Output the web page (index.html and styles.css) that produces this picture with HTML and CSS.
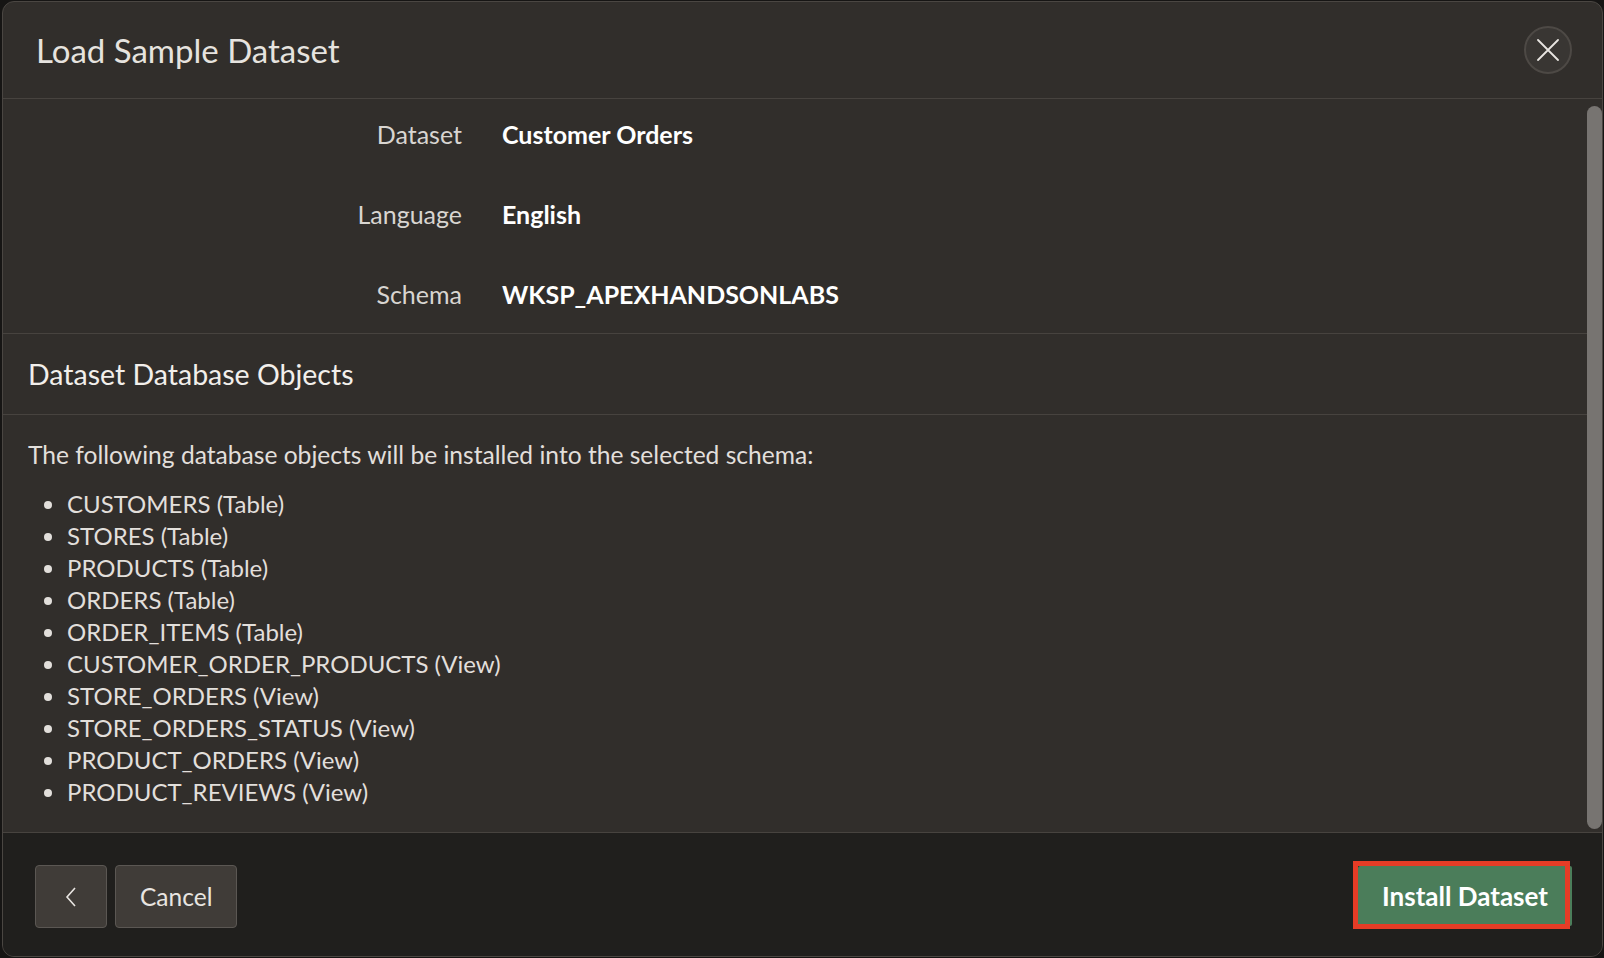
FILE: index.html
```html
<!DOCTYPE html>
<html lang="en">
<head>
<meta charset="utf-8">
<title>Load Sample Dataset</title>
<link rel="stylesheet" href="styles.css">
</head>
<body>
<div class="dialog">
  <header class="dlg-header">
    <h1 class="dlg-title">Load Sample Dataset</h1>
    <button class="close-btn" aria-label="Close">
      <svg width="22" height="22" viewBox="0 0 22 22"><path d="M1 1 L21 21 M21 1 L1 21" stroke="#e8e5e1" stroke-width="1.8" stroke-linecap="round" fill="none"/></svg>
    </button>
  </header>
  <div class="dlg-body">
    <div class="dlg-content">
      <div class="form">
        <div class="label">Dataset</div><div class="value">Customer Orders</div>
        <div class="label">Language</div><div class="value">English</div>
        <div class="label">Schema</div><div class="value">WKSP_APEXHANDSONLABS</div>
      </div>
      <div class="region-head"><h2>Dataset Database Objects</h2></div>
      <div class="region-body">
        <p>The following database objects will be installed into the selected schema:</p>
        <ul>
          <li>CUSTOMERS (Table)</li>
          <li>STORES (Table)</li>
          <li>PRODUCTS (Table)</li>
          <li>ORDERS (Table)</li>
          <li>ORDER_ITEMS (Table)</li>
          <li>CUSTOMER_ORDER_PRODUCTS (View)</li>
          <li>STORE_ORDERS (View)</li>
          <li>STORE_ORDERS_STATUS (View)</li>
          <li>PRODUCT_ORDERS (View)</li>
          <li>PRODUCT_REVIEWS (View)</li>
        </ul>
      </div>
    </div>
    <div class="scrollbar"><div class="thumb"></div></div>
  </div>
  <footer class="dlg-footer">
    <div class="left-btns">
      <button class="btn btn-back" aria-label="Previous">
        <svg width="12" height="20" viewBox="0 0 12 20"><path d="M10 1 L2 10 L10 19" stroke="#e8e5e1" stroke-width="1.6" fill="none"/></svg>
      </button>
      <button class="btn">Cancel</button>
    </div>
    <button class="btn btn-primary">Install Dataset</button>
  </footer>
</div>
</body>
</html>
```
FILE: styles.css
```css
html, body {
  margin: 0;
  padding: 0;
  height: 100%;
  background: #161514;
  font-family: Lato, "Open Sans", sans-serif;
}
.dialog {
  box-sizing: border-box;
  margin: 1px 1px 1px 2px;
  height: 956px;
  border: 1px solid #4a4642;
  border-radius: 12px;
  background: #312e2b;
  overflow: hidden;
  display: flex;
  flex-direction: column;
}
.dlg-header {
  height: 96px;
  flex: none;
  border-bottom: 1px solid #47433f;
  display: flex;
  align-items: center;
  justify-content: space-between;
  padding: 0 30px 0 33px;
}
.dlg-title {
  margin: 0;
  font-weight: 400;
  font-size: 33px;
  color: #e6e3df;
}
.close-btn {
  width: 48px;
  height: 48px;
  border-radius: 50%;
  border: 2px solid #4d4945;
  background: #393633;
  display: flex;
  align-items: center;
  justify-content: center;
  padding: 0;
}
.dlg-body {
  flex: 1;
  display: flex;
  min-height: 0;
}
.dlg-content {
  flex: 1;
  min-width: 0;
}
.form {
  display: grid;
  grid-template-columns: 459px 1fr;
  grid-auto-rows: 74px;
  row-gap: 6px;
  column-gap: 40px;
  align-items: center;
  border-bottom: 1px solid #47433f;
  font-size: 25px;
}
.label, .value {
  padding-bottom: 5px;
}
.label {
  text-align: right;
  color: #d8d5d1;
}
.value {
  color: #ffffff;
  font-weight: 700;
}
.region-head {
  height: 80px;
  display: flex;
  align-items: center;
  padding-left: 25px;
  border-bottom: 1px solid #47433f;
}
.region-head h2 {
  margin: 0;
  font-size: 28.5px;
  font-weight: 400;
  color: #f2efeb;
}
.region-body {
  padding: 24px 25px 0;
  font-size: 24px;
  line-height: 32px;
  color: #e2dfdb;
}
.region-body p {
  margin: 0 0 17px;
  font-size: 24.6px;
}
.region-body ul {
  margin: 0;
  padding-left: 39px;
}
.scrollbar {
  width: 15px;
  flex: none;
  padding-top: 7px;
  padding-bottom: 3px;
  display: flex;
}
.thumb {
  flex: 1;
  background: #777471;
  border-radius: 8px;
}
.dlg-footer {
  flex: none;
  height: 124px;
  box-sizing: border-box;
  background: #201f1d;
  border-top: 1px solid #47433f;
  display: flex;
  align-items: flex-start;
  justify-content: space-between;
  padding: 32px 30px 0 32px;
}
.left-btns {
  display: flex;
  gap: 8px;
}
.btn {
  height: 63px;
  box-sizing: border-box;
  border: 1px solid #5b5753;
  border-radius: 4px;
  background: #403c38;
  color: #e8e5e1;
  font-family: Lato, "Open Sans", sans-serif;
  font-size: 24.5px;
  padding: 0 24px;
  display: flex;
  align-items: center;
  justify-content: center;
}
.btn-back {
  width: 72px;
  padding: 0;
}
.btn-primary {
  position: relative;
  margin-top: 1px;
  height: 60px;
  width: 214px;
  border: none;
  border-radius: 2px;
  background: #4b7d5a;
  color: #ffffff;
  font-weight: 700;
  font-size: 26px;
}
.btn-primary::after {
  content: "";
  position: absolute;
  left: -5px;
  top: -5px;
  right: 2px;
  bottom: -3px;
  border: 5px solid #e63c26;
  pointer-events: none;
}
```
